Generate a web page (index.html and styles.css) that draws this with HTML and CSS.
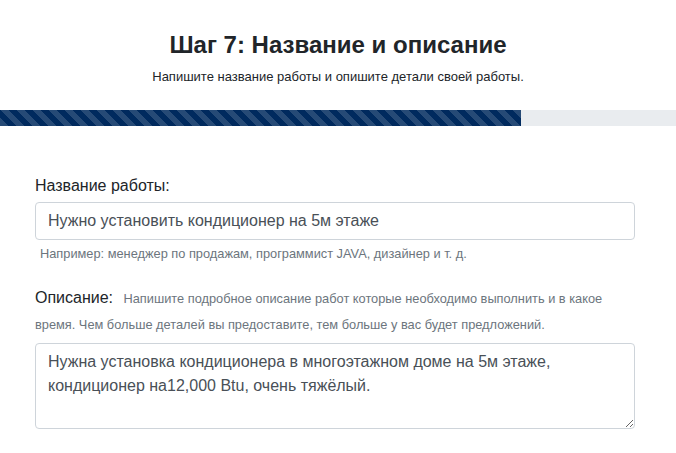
FILE: index.html
```html
<!DOCTYPE html>
<html lang="ru">
<head>
    <meta charset="UTF-8">
    <meta name="viewport" content="width=device-width, initial-scale=1.0">
    <title>Шаг 7</title>
    <link rel="stylesheet" href="styles.css">
</head>
<body>
    <div class="step-header">
        <h3>Шаг 7: Название и описание</h3>
        <p>Напишите название работы и опишите детали своей работы.</p>
    </div>

    <div class="progress">
        <div class="progress-bar" style="width: 77%"></div>
    </div>

    <form class="step-form">
        <div class="form-group">
            <label for="jobTitle">Название работы:</label>
            <input type="text" id="jobTitle" class="form-control" value="Нужно установить кондиционер на 5м этаже">
            <small class="form-text">Например: менеджер по продажам, программист JAVA, дизайнер и т. д.</small>
        </div>

        <div class="form-group">
            <label for="jobDesc" class="desc-label">Описание: <small class="hint">Напишите подробное описание работ которые необходимо выполнить и в какое время. Чем больше деталей вы предоставите, тем больше у вас будет предложений.</small></label>
            <textarea id="jobDesc" class="form-control" rows="3">Нужна установка кондиционера в многоэтажном доме на 5м этаже, кондиционер на12,000 Btu, очень тяжёлый.</textarea>
        </div>
    </form>
</body>
</html>
```

FILE: styles.css
```css
body {
    margin: 0;
    font-family: "Liberation Sans", Arial, sans-serif;
    font-size: 16px;
    line-height: 1.5;
    color: #212529;
    background-color: #fff;
}
.step-header {
    text-align: center;
    padding-top: 31px;
}
.step-header h3 {
    margin: 0 0 7px;
    font-size: 24px;
    font-weight: bold;
    line-height: 1.2;
}
.step-header p {
    margin: 0;
    font-size: 13px;
}
.progress {
    margin-top: 24px;
    height: 16px;
    background-color: #e9ecef;
    overflow: hidden;
}
.progress-bar {
    height: 100%;
    background-color: #002a5e;
    background-image: linear-gradient(45deg, rgba(255, 255, 255, .15) 25%, transparent 25%, transparent 50%, rgba(255, 255, 255, .15) 50%, rgba(255, 255, 255, .15) 75%, transparent 75%, transparent);
    background-size: 16px 16px;
}
.step-form {
    width: 600px;
    margin: 0 35px;
    padding-top: 48px;
}
.form-group {
    margin-bottom: 22px;
}
label {
    display: inline-block;
    margin-bottom: 4px;
}
.desc-label {
    line-height: 25px;
    margin-bottom: 6px;
}
.form-control {
    display: block;
    box-sizing: border-box;
    width: 100%;
    padding: 6px 12px;
    font-family: inherit;
    font-size: 16px;
    line-height: 1.5;
    color: #495057;
    background-color: #fff;
    border: 1px solid #ced4da;
    border-radius: 4px;
}
input.form-control {
    height: 38px;
}
textarea.form-control {
    height: 86px;
    resize: vertical;
}
.form-text {
    display: block;
    margin-top: 4px;
    padding-left: 5px;
    font-size: 12.8px;
    color: #6c757d;
}
.hint {
    font-size: 12.8px;
    color: #6c757d;
    padding-left: 6px;
}
```
